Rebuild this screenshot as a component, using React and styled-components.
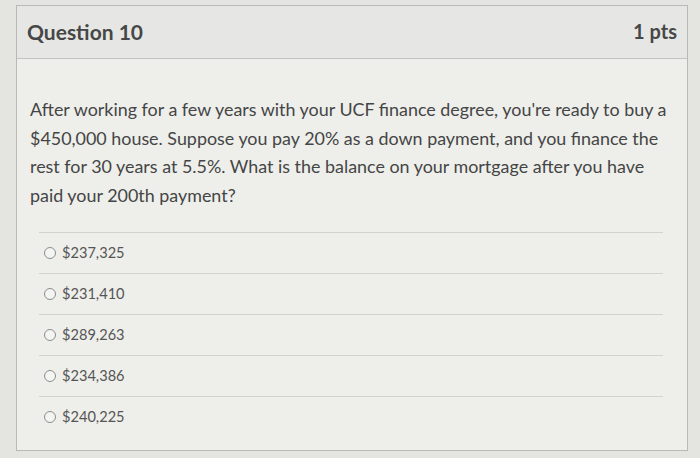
import React from "react";
import styled, { createGlobalStyle } from "styled-components";

const GlobalStyle = createGlobalStyle`
  html, body {
    margin: 0;
    padding: 0;
    background: #e4e5e1;
  }
  body {
    font-family: Lato, "Open Sans", "Liberation Sans", sans-serif;
    color: #444;
  }
`;

const answers = ["$237,325", "$231,410", "$289,263", "$234,386", "$240,225"];

const Page = styled.div`
  width: 700px;
  height: 458px;
  padding: 5px 12px 0 16px;
  box-sizing: border-box;
  overflow: hidden;
`;

const Card = styled.div`
  height: 446px;
  box-sizing: border-box;
  border: 1px solid #b9bab6;
  background: #eeefeb;
  display: flex;
  flex-direction: column;
`;

const Header = styled.div`
  height: 53px;
  box-sizing: border-box;
  display: flex;
  align-items: center;
  justify-content: space-between;
  padding: 0 10px 2px 10px;
  background: #e6e7e4;
  border-bottom: 1px solid #c3c4c0;
`;

const Title = styled.h2`
  margin: 0;
  font-size: 21px;
  font-weight: 700;
  color: #474747;
`;

const Points = styled.span`
  font-size: 20px;
  font-weight: 700;
  color: #474747;
`;

const Body = styled.div`
  padding: 36px 12px 0 13px;
`;

const Prompt = styled.p`
  margin: 0 0 22px 0;
  font-size: 17.9px;
  line-height: 28.7px;
  color: #454545;
`;

const Answers = styled.ul`
  list-style: none;
  margin: 0 12px 0 9px;
  padding: 0;
`;

const Answer = styled.li`
  height: 40px;
  display: flex;
  align-items: center;
  gap: 6px;
  padding-left: 5px;
  border-top: 1px solid #d2d3cf;
  font-size: 14.6px;
  color: #555;
`;

const Radio = styled.span`
  width: 10px;
  height: 10px;
  border-radius: 50%;
  border: 1.5px solid #8c8c8c;
  background: #f4f4f2;
  flex-shrink: 0;
`;

const App = () => (
  <Page>
    <GlobalStyle />
    <Card>
      <Header>
        <Title>Question 10</Title>
        <Points>1 pts</Points>
      </Header>
      <Body>
        <Prompt>
          After working for a few years with your UCF finance degree, you're ready to buy a<br />
          $450,000 house. Suppose you pay 20% as a down payment, and you finance the<br />
          rest for 30 years at 5.5%. What is the balance on your mortgage after you have<br />
          paid your 200th payment?
        </Prompt>
        <Answers>
          {answers.map((a) => (
            <Answer key={a}>
              <Radio />
              {a}
            </Answer>
          ))}
        </Answers>
      </Body>
    </Card>
  </Page>
);

export default App;
